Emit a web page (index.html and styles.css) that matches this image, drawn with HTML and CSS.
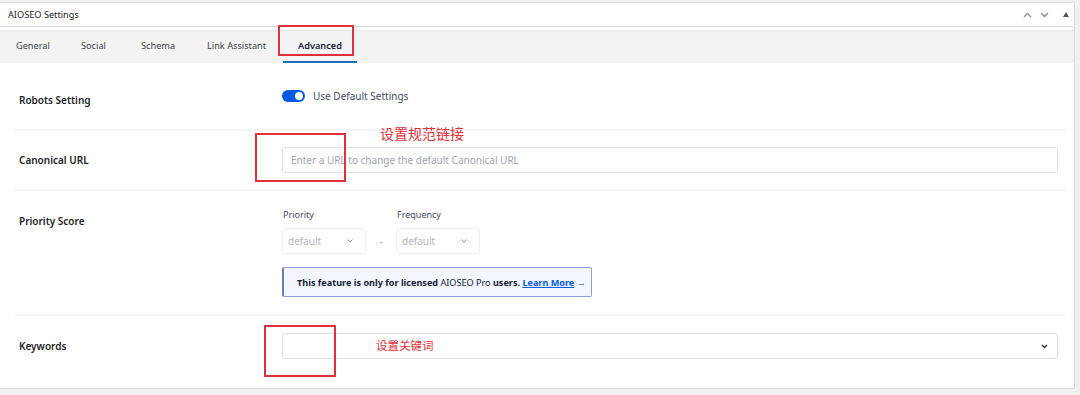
FILE: index.html
```html
<!DOCTYPE html>
<html lang="en">
<head>
    <meta charset="UTF-8">
    <meta name="viewport" content="width=device-width, initial-scale=1.0">
    <title>AIOSEO Settings</title>
    <link rel="stylesheet" href="styles.css">
</head>
<body>
    <div class="panel">
        <div class="panel-header">
            <span class="panel-title">AIOSEO Settings</span>
            <div class="panel-actions">
                <svg width="9" height="6" viewBox="0 0 9 6"><path d="M1 5 L4.5 1.5 L8 5" fill="none" stroke="#8c8f94" stroke-width="1.3"/></svg>
                <svg width="9" height="6" viewBox="0 0 9 6"><path d="M1 1 L4.5 4.5 L8 1" fill="none" stroke="#8c8f94" stroke-width="1.3"/></svg>
                <svg width="6" height="5" viewBox="0 0 6 5"><path d="M0 5 L3 0 L6 5 Z" fill="#50575e"/></svg>
            </div>
        </div>
        <div class="tabs">
            <span class="tab">General</span>
            <span class="tab">Social</span>
            <span class="tab">Schema</span>
            <span class="tab">Link Assistant</span>
            <span class="tab active">Advanced</span>
        </div>

        <div class="rows">
            <div class="row row-robots">
                <div class="label">Robots Setting</div>
                <div class="control toggle-line">
                    <span class="toggle"><span class="knob"></span></span>
                    <span class="toggle-text">Use Default Settings</span>
                </div>
            </div>
            <div class="row">
                <div class="label">Canonical URL</div>
                <div class="control">
                    <div class="input placeholder">Enter a URL to change the default Canonical URL</div>
                </div>
            </div>
            <div class="row row-top">
                <div class="label label-top">Priority Score</div>
                <div class="control">
                    <div class="selects">
                        <div class="select-group">
                            <div class="small-label">Priority</div>
                            <div class="select">default
                                <svg width="6" height="4" viewBox="0 0 6 4"><path d="M0.5 0.5 L3 3 L5.5 0.5" fill="none" stroke="#9a9da6" stroke-width="1"/></svg>
                            </div>
                        </div>
                        <div class="dash">-</div>
                        <div class="select-group">
                            <div class="small-label">Frequency</div>
                            <div class="select">default
                                <svg width="6" height="4" viewBox="0 0 6 4"><path d="M0.5 0.5 L3 3 L5.5 0.5" fill="none" stroke="#9a9da6" stroke-width="1"/></svg>
                            </div>
                        </div>
                    </div>
                    <div class="notice">
                        <span><b>This feature is only for licensed</b> AIOSEO Pro <b>users.</b> <a class="learn" href="#">Learn More</a> <span class="arrow">&rarr;</span></span>
                    </div>
                </div>
            </div>
            <div class="row">
                <div class="label">Keywords</div>
                <div class="control">
                    <div class="input keywords">
                        <svg width="7" height="5" viewBox="0 0 7 5"><path d="M1 1 L3.5 3.5 L6 1" fill="none" stroke="#333" stroke-width="1.5"/></svg>
                    </div>
                </div>
            </div>
        </div>

        <div class="mark mark-tab"></div>
        <div class="mark mark-canonical"></div>
        <div class="mark mark-keywords"></div>
        <div class="note note-canonical">设置规范链接</div>
        <div class="note note-keywords">设置关键词</div>
    </div>
</body>
</html>
```

FILE: styles.css
```css
body {
    margin: 0;
    padding-top: 2px;
    background: #f0f0f1;
    font-family: "Noto Sans", "Open Sans", sans-serif;
    font-size: 10px;
    color: #1d2327;
}
.panel {
    position: relative;
    width: 1075px;
    height: 387px;
    background: #fff;
    border-top: 1px solid #dcdcde;
    border-right: 1px solid #dcdcde;
    border-bottom: 1px solid #dcdcde;
    box-sizing: border-box;
}
.panel-header {
    height: 23px;
    display: flex;
    align-items: center;
    justify-content: space-between;
    padding: 0 5px 0 8px;
    border-bottom: 1px solid #dcdcde;
}
.panel-title {
    font-size: 9.2px;
    color: #1d2327;
}
.panel-actions {
    display: flex;
    align-items: center;
    gap: 8px;
}
.panel-actions svg:last-child {
    margin-left: 6px;
}
.tabs {
    margin-top: 3px;
    height: 33px;
    background: #f3f3f3;
    border-top: 1px solid #e6e6e6;
    display: flex;
    align-items: stretch;
    padding-left: 16px;
    box-sizing: border-box;
}
.tab {
    display: flex;
    align-items: center;
    padding-bottom: 4px;
    color: #3c434a;
    font-size: 9.2px;
    white-space: nowrap;
}
.tab:nth-child(1) { width: 65px; }
.tab:nth-child(2) { width: 60px; }
.tab:nth-child(3) { width: 66px; }
.tab:nth-child(4) { width: 76px; }
.tab.active {
    width: 74px;
    padding-left: 15px;
    padding-bottom: 2px;
    color: #141b38;
    font-weight: 600;
    border-bottom: 2px solid #1f6db4;
    box-sizing: border-box;
}
.rows {
    margin: 0 9px 0 15px;
}
.row {
    display: grid;
    grid-template-columns: 267px 1fr;
    align-items: center;
    height: 60px;
    padding: 0 7px 0 0;
    border-bottom: 2px solid #f3f3f3;
    box-sizing: border-box;
}
.row-robots {
    height: 68px;
}
.row:last-child {
    border-bottom: none;
}
.row-top {
    height: 125px;
    align-items: start;
    padding-top: 17px;
}
.label {
    padding-left: 4px;
    font-weight: 600;
    color: #1d2327;
    font-size: 10px;
}
.row-robots .label {
    margin-top: 8px;
}
.label-top {
    margin-top: 6px;
}
.toggle-line {
    display: flex;
    align-items: center;
    gap: 8px;
}
.toggle {
    width: 23px;
    height: 12px;
    border-radius: 6px;
    background: #005ae0;
    display: flex;
    align-items: center;
    justify-content: flex-end;
    padding: 0 2px;
    box-sizing: border-box;
}
.knob {
    width: 8px;
    height: 8px;
    border-radius: 50%;
    background: #fff;
}
.toggle-text {
    color: #434960;
}
.input {
    height: 26px;
    border: 1px solid #dfe0e3;
    border-radius: 3px;
    box-sizing: border-box;
    display: flex;
    align-items: center;
    padding: 0 8px;
}
.placeholder {
    color: #a0a3ad;
}
.keywords {
    justify-content: flex-end;
    padding-right: 9px;
}
.selects {
    display: flex;
    align-items: flex-end;
}
.small-label {
    color: #434960;
    font-size: 9px;
    margin-bottom: 7px;
    padding-left: 1px;
}
.select {
    width: 84px;
    height: 26px;
    border: 1px solid #eeeff1;
    border-radius: 3px;
    box-sizing: border-box;
    display: flex;
    align-items: center;
    justify-content: space-between;
    padding: 0 12px 0 5px;
    color: #b3b6bd;
}
.dash {
    width: 30px;
    height: 26px;
    display: flex;
    align-items: center;
    justify-content: center;
    color: #a0a3ad;
}
.notice {
    margin-top: 13px;
    width: 310px;
    height: 30px;
    box-sizing: border-box;
    background: #f3f7fd;
    border: 1px solid #8da0d6;
    border-left: 2px solid #6b7fae;
    border-radius: 2px;
    display: flex;
    align-items: center;
    padding-left: 13px;
    color: #141b38;
    font-size: 9.1px;
    white-space: nowrap;
}
.notice b {
    font-weight: 700;
}
.learn {
    color: #005ae0;
    font-weight: 700;
}
.arrow {
    color: #005ae0;
}
.mark {
    position: absolute;
    border: 2px solid #e0303a;
    box-sizing: border-box;
}
.mark-tab {
    left: 278px;
    top: 22px;
    width: 76px;
    height: 31px;
}
.mark-canonical {
    left: 255px;
    top: 130px;
    width: 91px;
    height: 49px;
}
.mark-keywords {
    left: 264px;
    top: 322px;
    width: 72px;
    height: 52px;
}
.note {
    position: absolute;
    color: #e0303a;
    font-family: "Noto Sans CJK SC", sans-serif;
}
.note-canonical {
    left: 380px;
    top: 120px;
    font-size: 14px;
}
.note-keywords {
    left: 376px;
    top: 334px;
    font-size: 11.5px;
}
```
